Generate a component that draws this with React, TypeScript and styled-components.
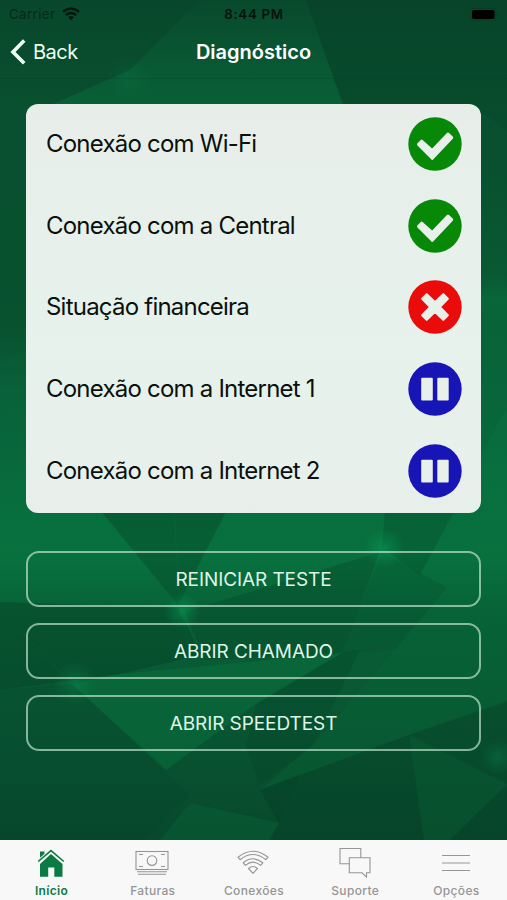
import React from "react";
import styled, { createGlobalStyle } from "styled-components";

const GlobalStyle = createGlobalStyle`
  * { box-sizing: border-box; }
  body { margin: 0; background: #084a2b; font-family: Inter, "Liberation Sans", sans-serif; }
  button { font-family: inherit; background: none; border: 0; padding: 0; }
`;

const Screen = styled.div`
  position: relative;
  isolation: isolate;
  width: 507px;
  height: 900px;
  display: flex;
  flex-direction: column;
  overflow: hidden;
`;

const Backdrop = styled.svg`
  position: absolute;
  inset: 0;
  z-index: -1;
`;

const StatusBar = styled.div`
  height: 27px;
  padding: 1px 8px 0 9px;
  display: grid;
  grid-template-columns: 1fr auto 1fr;
  align-items: center;
  font-size: 13.3px;
  color: #03130b;
`;

const Carrier = styled.div`
  display: flex;
  align-items: center;
  gap: 7px;
  letter-spacing: 0.4px;
  color: #052a18;
`;

const Clock = styled.div`
  font-weight: 600;
  letter-spacing: 0.7px;
`;

const Battery = styled.div`
  display: flex;
  justify-content: flex-end;
`;

const NavBar = styled.header`
  height: 52px;
  padding: 0 9px 2px;
  display: grid;
  grid-template-columns: 1fr auto 1fr;
  align-items: center;
  color: #fff;
  border-bottom: 1px solid rgba(0, 50, 25, 0.18);
`;

const BackButton = styled.button`
  display: flex;
  align-items: center;
  gap: 7px;
  color: #eefff4;
  font-size: 20px;
  letter-spacing: -0.5px;
`;

const Title = styled.h1`
  margin: 0;
  font-size: 20px;
  font-weight: 600;
  letter-spacing: 0;
`;

const Content = styled.main`
  flex: 1;
  padding: 25px 26px 0 26px;
`;

const Card = styled.section`
  height: 409px;
  border-radius: 12px;
  background: linear-gradient(180deg, #e7eeea, #e7f2ec 60%, #e8efeb);
  display: grid;
  grid-template-rows: repeat(5, 1fr);
`;

const Row = styled.div`
  display: flex;
  align-items: center;
  justify-content: space-between;
  padding: 0 19.4px 2px 20px;
`;

const Label = styled.span`
  font-size: 24px;
  line-height: 30px;
  color: #0b100d;
  white-space: nowrap;
  letter-spacing: -0.78px;
`;

const Actions = styled.div`
  margin-top: 38px;
  display: flex;
  flex-direction: column;
  gap: 16px;
`;

const ActionButton = styled.button`
  height: 56px;
  padding-top: 1px;
  border: 2px solid rgba(214, 242, 225, 0.62);
  border-radius: 13px;
  color: #dff5e8;
  font-size: 19px;
  font-weight: 400;
  letter-spacing: -0.08px;
`;

const TabBar = styled.nav`
  height: 60px;
  padding-left: 1px;
  background: #f8f8f8;
  display: grid;
  grid-template-columns: repeat(5, 1fr);
`;

const Tab = styled.button<{ $active?: boolean }>`
  display: flex;
  flex-direction: column;
  align-items: center;
  padding-top: 6px;
  gap: 7px;
  color: ${(p) => (p.$active ? "#0b7a43" : "#959595")};
  font-size: 12px;
  line-height: 15px;
  font-weight: ${(p) => (p.$active ? 600 : 500)};
  letter-spacing: 0.35px;
`;

const IconSlot = styled.span`
  height: 30px;
  margin-right: 1.4px;
  display: flex;
  align-items: flex-start;
`;

type Status = "ok" | "fail" | "paused";

const statusColor: Record<Status, string> = {
  ok: "#078807",
  fail: "#ea0b0b",
  paused: "#1815b6",
};

function StatusIcon({ status }: { status: Status }) {
  return (
    <svg width="54" height="54" viewBox="0 0 54 54">
      <circle cx="27" cy="27" r="26.7" fill={statusColor[status]} />
      {status === "ok" && (
        <path
          d="M10.5 27.4 13.6 24.2 24.3 33.6 40 17 43.7 20.6 24.3 41.3Z"
          fill="#e7f0eb"
          stroke="#e7f0eb"
          strokeWidth="3"
          strokeLinejoin="round"
        />
      )}
      {status === "fail" && (
        <path
          d="M18.7 14.2 27 22.2 35.3 14.2 39.8 18.7 31.8 27 39.8 35.3 35.3 39.8 27 31.8 18.7 39.8 14.2 35.3 22.2 27 14.2 18.7Z"
          fill="#e7f0eb"
          stroke="#e7f0eb"
          strokeWidth="2.2"
          strokeLinejoin="round"
        />
      )}
      {status === "paused" && (
        <g fill="#e7f0eb">
          <rect x="13.2" y="15.8" width="11.6" height="22.6" rx="1" />
          <rect x="29.3" y="15.8" width="11.4" height="22.6" rx="1" />
        </g>
      )}
    </svg>
  );
}

function PolygonBackdrop() {
  return (
    <Backdrop width="507" height="900" viewBox="0 0 507 900">
      <defs>
        <linearGradient id="base" x1="0" y1="0" x2="0" y2="1">
          <stop offset="0" stopColor="#08472b" />
          <stop offset="0.12" stopColor="#08502f" />
          <stop offset="0.36" stopColor="#085230" />
          <stop offset="0.44" stopColor="#08603a" />
          <stop offset="0.54" stopColor="#086c3d" />
          <stop offset="0.62" stopColor="#07713e" />
          <stop offset="0.69" stopColor="#085f36" />
          <stop offset="0.8" stopColor="#085632" />
          <stop offset="0.93" stopColor="#07492c" />
        </linearGradient>
        <radialGradient id="glow">
          <stop offset="0" stopColor="#0aa15a" stopOpacity="0.5" />
          <stop offset="0.4" stopColor="#0aa15a" stopOpacity="0.28" />
          <stop offset="1" stopColor="#0aa15a" stopOpacity="0" />
        </radialGradient>
        <linearGradient id="top" x1="0" y1="0" x2="0" y2="1">
          <stop offset="0" stopColor="#087240" stopOpacity="0.05" />
          <stop offset="1" stopColor="#087240" stopOpacity="0.5" />
        </linearGradient>
        <linearGradient id="right" x1="0" y1="0" x2="0" y2="1">
          <stop offset="0" stopColor="#08703f" stopOpacity="0" />
          <stop offset="0.32" stopColor="#08703f" stopOpacity="0.25" />
          <stop offset="0.38" stopColor="#08703f" stopOpacity="0.65" />
          <stop offset="1" stopColor="#08703f" stopOpacity="0" />
        </linearGradient>
      </defs>
      <rect width="507" height="900" fill="url(#base)" />
      <path d="M200 0 130 70 40 110H345L306 0Z" fill="url(#top)" />
      <path d="M306 0 343 104H470L507 130V0Z" fill="#053a24" opacity="0.2" />
      <path d="M0 362 27 350V440L0 410Z" fill="#08673a" opacity="0.2" />
      <path d="M470 160H507V520H470Z" fill="url(#right)" />
      <path d="M481 455 500 420 507 410V520H481Z" fill="#087c45" opacity="0.25" />
      <path d="M96 505 178 605 226 512Z" fill="#064a2b" opacity="0.45" />
      <path d="M385 510H455L420 575 382 548Z" fill="#064f2d" opacity="0.4" />
      <path d="M0 602 178 608 201 655 120 674 0 690Z" fill="#053f26" opacity="0.4" />
      <path d="M185 612 380 552 358 611 342 653 205 660Z" fill="#064a2a" opacity="0.42" />
      <path d="M120 674 342 653 256 704 166 770 72 684Z" fill="#07723e" opacity="0.5" />
      <path d="M72 684 190 795 145 840H0V690Z" fill="#05432a" opacity="0.25" />
      <path d="M382 552 447 588 395 650 342 653 358 611Z" fill="#06502f" opacity="0.32" />
      <path d="M342 653 360 650 313 745 260 785 246 747 256 704Z" fill="#053f26" opacity="0.28" />
      <path d="M395 650 447 588 507 585V700L409 735 260 790 313 745Z" fill="#076b3a" opacity="0.28" />
      <path d="M507 702 409 735 260 790 279 823 268 840H507Z" fill="#053d25" opacity="0.3" />
      <path d="M190 803 279 823 270 840H160Z" fill="#086b3a" opacity="0.35" />
      <path d="M409 735 424 840H450L507 784Z" fill="#086838" opacity="0.32" />
      <path d="M260 790 300 774 279 823Z" fill="#053b24" opacity="0.15" />
      <g stroke="#0b7d48" strokeWidth="0.7" fill="none" opacity="0.25">
        <path d="M174 510 180 605 190 650M382 550 425 510M20 630 72 684" />
      </g>
      <circle cx="182" cy="611" r="18" fill="url(#glow)" />
      <circle cx="384" cy="548" r="20" fill="url(#glow)" />
      <circle cx="75" cy="683" r="22" fill="url(#glow)" opacity="0.6" />
      <circle cx="498" cy="758" r="18" fill="url(#glow)" opacity="0.5" />
      <circle cx="130" cy="77" r="22" fill="url(#glow)" opacity="0.25" />
    </Backdrop>
  );
}

const HomeIcon = () => (
  <svg width="30" height="31" viewBox="0 0 30 31" fill="currentColor">
    <path d="M4 5.5H8.5V9L4 13Z" />
    <path d="M15 8 26.5 18V30.8H18.3V21.5H12.2V30.8H4V18Z" />
    <path d="M2.2 15.5 15 4.6 27.8 15.5" fill="none" stroke="#f8f8f8" strokeWidth="3.4" />
    <path d="M2.2 15.5 15 4.6 27.8 15.5" fill="none" stroke="currentColor" strokeWidth="1.6" />
  </svg>
);

const MoneyIcon = () => (
  <svg width="34" height="30" viewBox="0 0 34 30" fill="none" stroke="currentColor" strokeWidth="1.1">
    <rect x="1" y="5.5" width="32" height="18" />
    <circle cx="17" cy="14.6" r="4.8" />
    <path d="M4 8.5H8M26 8.5H30M4 20.5H8M26 20.5H30M2 25.8H32M3 28.2H31" />
  </svg>
);

const OutlinedWifiIcon = () => (
  <svg width="32" height="30" viewBox="0 0 32 30" fill="none" stroke="currentColor" strokeWidth="1.1" strokeLinejoin="round">
    <path d="M1 11.2Q16-.8 31 11.2L28.9 13.7Q16 3.2 3.1 13.7Z" />
    <path d="M6.2 16.8Q16 8.8 25.8 16.8L23.6 19.3Q16 13 8.4 19.3Z" />
    <path d="M11.5 22.5Q16 18.5 20.5 22.5L16 27.3Z" />
  </svg>
);

const ChatIcon = () => (
  <svg width="32" height="32" viewBox="0 0 32 32" fill="none" stroke="currentColor" strokeWidth="1.1">
    <path d="M10.3 17.8H1V2.5H21.8V11.8" />
    <path d="M10.3 11.8H31V26.8H27.5V31L23 26.8H10.3Z" />
  </svg>
);

const MenuIcon = () => (
  <svg width="28" height="30" viewBox="0 0 28 30" stroke="currentColor" strokeWidth="1.1">
    <path d="M0 9.5H28M0 17H28M0 24.5H28" />
  </svg>
);

const checks: { label: string; status: Status }[] = [
  { label: "Conexão com Wi-Fi", status: "ok" },
  { label: "Conexão com a Central", status: "ok" },
  { label: "Situação financeira", status: "fail" },
  { label: "Conexão com a Internet 1", status: "paused" },
  { label: "Conexão com a Internet 2", status: "paused" },
];

const actions = ["REINICIAR TESTE", "ABRIR CHAMADO", "ABRIR SPEEDTEST"];

const tabs = [
  { label: "Início", Icon: HomeIcon },
  { label: "Faturas", Icon: MoneyIcon },
  { label: "Conexões", Icon: OutlinedWifiIcon },
  { label: "Suporte", Icon: ChatIcon },
  { label: "Opções", Icon: MenuIcon },
];

export default function App() {
  return (
    <>
      <GlobalStyle />
      <Screen>
        <PolygonBackdrop />
        <StatusBar>
          <Carrier>
            Carrier
            <svg width="18" height="14" viewBox="0 0 18 14" fill="none" stroke="#03180d" strokeWidth="2.4">
              <path d="M1 4.8Q9-1.8 17 4.8M3.8 8Q9 3.8 14.2 8" />
              <path d="M9 13.2 6 10.2Q9 7.8 12 10.2Z" fill="#03180d" stroke="none" />
            </svg>
          </Carrier>
          <Clock>8:44 PM</Clock>
          <Battery>
            <svg width="29" height="13" viewBox="0 0 29 13">
              <rect x="0.5" y="0.5" width="25.5" height="12" rx="3" fill="none" stroke="#063d25" />
              <rect x="2" y="2" width="22.5" height="9" rx="1.8" fill="#000" />
              <path d="M27.3 4.5Q29 6.5 27.3 8.5Z" fill="#063d25" />
            </svg>
          </Battery>
        </StatusBar>
        <NavBar>
          <BackButton>
            <svg width="17" height="26" viewBox="0 0 17 26" fill="none" stroke="currentColor" strokeWidth="3.6">
              <path d="M15.2 1.6 4 13 15.2 24.2" />
            </svg>
            Back
          </BackButton>
          <Title>Diagnóstico</Title>
          <span />
        </NavBar>
        <Content>
          <Card>
            {checks.map((c) => (
              <Row key={c.label}>
                <Label>{c.label}</Label>
                <StatusIcon status={c.status} />
              </Row>
            ))}
          </Card>
          <Actions>
            {actions.map((label) => (
              <ActionButton key={label}>{label}</ActionButton>
            ))}
          </Actions>
        </Content>
        <TabBar>
          {tabs.map(({ label, Icon }, i) => (
            <Tab key={label} $active={i === 0}>
              <IconSlot>
                <Icon />
              </IconSlot>
              {label}
            </Tab>
          ))}
        </TabBar>
      </Screen>
    </>
  );
}
